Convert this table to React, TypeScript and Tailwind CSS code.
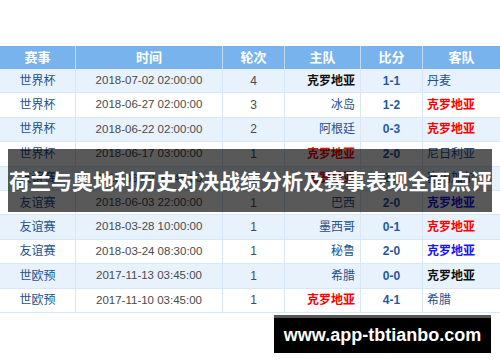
import React from "react";

type Team = { name: string; tone?: "red" | "black" | "blue" | "plain" };

type Match = {
  league: string;
  time: string;
  round: string;
  home: Team;
  score: string;
  away: Team;
};

const matches: Match[] = [
  { league: "世界杯", time: "2018-07-02 02:00:00", round: "4", home: { name: "克罗地亚", tone: "black" }, score: "1-1", away: { name: "丹麦" } },
  { league: "世界杯", time: "2018-06-27 02:00:00", round: "3", home: { name: "冰岛" }, score: "1-2", away: { name: "克罗地亚", tone: "red" } },
  { league: "世界杯", time: "2018-06-22 02:00:00", round: "2", home: { name: "阿根廷" }, score: "0-3", away: { name: "克罗地亚", tone: "red" } },
  { league: "世界杯", time: "2018-06-17 03:00:00", round: "1", home: { name: "克罗地亚", tone: "red" }, score: "2-0", away: { name: "尼日利亚" } },
  { league: "友谊赛", time: "2018-06-09 02:45:00", round: "1", home: { name: "克罗地亚", tone: "red" }, score: "2-1", away: { name: "塞内加尔" } },
  { league: "友谊赛", time: "2018-06-03 22:00:00", round: "1", home: { name: "巴西" }, score: "2-0", away: { name: "克罗地亚", tone: "blue" } },
  { league: "友谊赛", time: "2018-03-28 10:00:00", round: "1", home: { name: "墨西哥" }, score: "0-1", away: { name: "克罗地亚", tone: "red" } },
  { league: "友谊赛", time: "2018-03-24 08:30:00", round: "1", home: { name: "秘鲁" }, score: "2-0", away: { name: "克罗地亚", tone: "blue" } },
  { league: "世欧预", time: "2017-11-13 03:45:00", round: "1", home: { name: "希腊" }, score: "0-0", away: { name: "克罗地亚", tone: "black" } },
  { league: "世欧预", time: "2017-11-10 03:45:00", round: "1", home: { name: "克罗地亚", tone: "red" }, score: "4-1", away: { name: "希腊" } },
];

const toneClass = {
  red: "font-bold text-[#ff0000]",
  black: "font-bold text-[#111111]",
  blue: "font-bold text-[#1515ee]",
  plain: "text-[#22508f]",
};

const cols = "grid grid-cols-[76px_147px_62px_76px_62px_77px]";

export default function App() {
  return (
    <div className="relative h-[362px] w-[500px] overflow-hidden bg-white font-['Liberation_Sans','Noto_Sans_CJK_SC',sans-serif] text-[12px]">
      <div className="pt-[46px]">
        <div className={`${cols} h-[23px] bg-[#78b3ee] text-[13px] font-bold text-white`}>
          {["赛事", "时间", "轮次", "主队", "比分", "客队"].map((h, i) => (
            <div key={h} className={`flex items-center justify-center ${i < 5 ? "border-r border-[#c3dcf6]" : ""}`}>
              {h}
            </div>
          ))}
        </div>
        {matches.map((m, i) => (
          <div
            key={m.time}
            className={`${cols} h-[24.4px] border-b border-[#d8e7f8] ${i % 2 === 0 ? "bg-[#e8f2fd]" : "bg-white"}`}
          >
            <div className="flex items-center justify-center border-r border-[#d8e7f8] text-[#22508f]">{m.league}</div>
            <div className="flex items-center justify-center border-r border-[#d8e7f8] text-[11.5px] text-[#4a4a4a]">{m.time}</div>
            <div className="flex items-center justify-center border-r border-[#d8e7f8] text-[#4a4a4a]">{m.round}</div>
            <div className={`flex items-center justify-end border-r border-[#d8e7f8] pr-[5px] ${toneClass[m.home.tone ?? "plain"]}`}>
              {m.home.name}
            </div>
            <div className="flex items-center justify-center border-r border-[#d8e7f8] font-bold text-[#1f5aa0]">{m.score}</div>
            <div className={`flex items-center pl-[4px] ${toneClass[m.away.tone ?? "plain"]}`}>{m.away.name}</div>
          </div>
        ))}
      </div>

      <div className="absolute left-[8px] top-[149px] flex h-[63px] w-[484px] items-center overflow-hidden whitespace-nowrap bg-black/65 pl-[1px] font-['Noto_Sans_CJK_SC',sans-serif] text-[21px] font-bold text-white">
        荷兰与奥地利历史对决战绩分析及赛事表现全面点评
      </div>

      <div className="absolute left-[274px] top-[315px] flex h-[38px] w-[217px] items-center justify-center whitespace-nowrap border-t-[3px] border-[#555555] bg-black pb-[1px] font-['Liberation_Sans',sans-serif] text-[18px] font-bold text-white">
        www.app-tbtianbo.com
      </div>
    </div>
  );
}
